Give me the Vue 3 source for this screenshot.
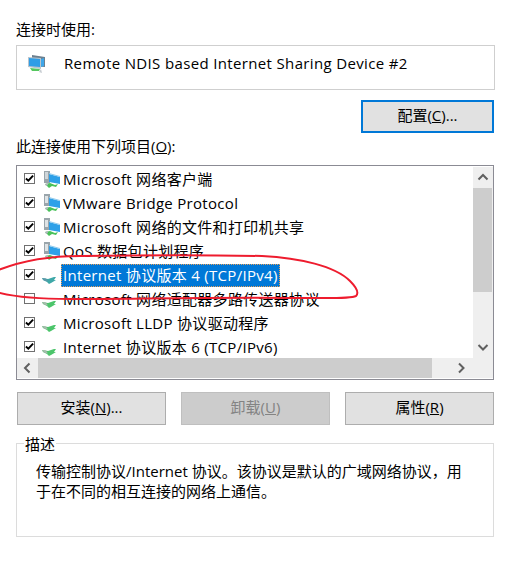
<script setup>
const items = [
  { name: 'Microsoft 网络客户端', on: true, kind: 'client' },
  { name: 'VMware Bridge Protocol', on: true, kind: 'service' },
  { name: 'Microsoft 网络的文件和打印机共享', on: true, kind: 'service' },
  { name: 'QoS 数据包计划程序', on: true, kind: 'service' },
  { name: 'Internet 协议版本 4 (TCP/IPv4)', on: true, kind: 'proto', selected: true },
  { name: 'Microsoft 网络适配器多路传送器协议', on: false, kind: 'proto' },
  { name: 'Microsoft LLDP 协议驱动程序', on: true, kind: 'proto' },
  { name: 'Internet 协议版本 6 (TCP/IPv6)', on: true, kind: 'proto' }
]
</script>

<template>
  <div class="page">
    <div class="label">连接时使用:</div>
    <div class="device">
      <svg class="device-icon" width="20" height="20" viewBox="0 0 20 20">
        <path d="M5 1 L18 3 V13 L5 12 Z" fill="#6c7f8e" />
        <path d="M1 3 L14 4 V15 L1 13 Z" fill="#b9c4cc" />
        <path d="M2 4 L13 5 V13 L2 12 Z" fill="#2f9de6" />
        <path d="M14 5 L17 4 V12 L14 13 Z" fill="#3fa7ea" />
        <path d="M3 14 L13 15 L12 17 L5 17 Z" fill="#55c75f" />
        <path d="M14 15 L15 19 L12 18 Z" fill="#c7cdd2" />
      </svg>
      <span class="device-name">Remote NDIS based Internet Sharing Device #2</span>
    </div>
    <div class="config-row">
      <button class="btn btn-focus">配置(<u>C</u>)...</button>
    </div>
    <div class="label label-list">此连接使用下列项目(<u>O</u>):</div>

    <div class="list">
      <div class="rows">
        <div v-for="item in items" :key="item.name" class="row">
          <span class="check">
            <svg v-if="item.on" width="10" height="9" viewBox="0 0 10 9">
              <path d="M1 4.5 L3.7 7 L9 1.2" fill="none" stroke="#000" stroke-width="2.1" />
            </svg>
          </span>
          <svg v-if="item.kind !== 'proto'" class="icon" width="20" height="20" viewBox="0 0 20 20">
            <rect x="2" :y="item.kind === 'client' ? 2 : 1" width="6" height="12" fill="#9aa5ab" />
            <rect x="3" y="3" width="3" height="7" :fill="item.kind === 'client' ? '#cfd6da' : '#dfe3e5'" />
            <path d="M7 5 L18 8 V15 L7 13 Z" fill="#2da0e8" />
            <path d="M7 4 L18 7 V8 L7 5 Z" fill="#8fc9ec" />
            <path d="M3 15 L8 14 L13 16 L16 15 L14 18 L10 17 L7 19 L5 17 Z" fill="#49c15a" />
            <path d="M3 15 L6 14 L6 16 L4 17 Z" fill="#aeb6ba" />
          </svg>
          <svg v-else class="icon" width="20" height="20" viewBox="0 0 20 20">
            <path
              d="M0 13 L6 14 L12 12 L14 12 L12 15 L14 15 L9 18 L7 19 L5 17 L1 15 Z"
              :fill="item.selected ? '#3ea8a8' : '#4cc56b'"
            />
            <path d="M0 13 L4 13.5 L6 16.5 L2 15.5 Z" :fill="item.selected ? '#5f97a8' : '#a9b8ae'" />
          </svg>
          <span class="row-name" :class="{ selected: item.selected }">{{ item.name }}</span>
        </div>
      </div>
      <div class="vbar">
        <svg class="arrow" width="21" height="21" viewBox="0 0 21 21">
          <path d="M5.5 12.5 L10 8 L14.5 12.5" fill="none" stroke="#606060" stroke-width="2" />
        </svg>
        <div class="vthumb"></div>
        <div class="spacer"></div>
        <svg class="arrow" width="21" height="21" viewBox="0 0 21 21">
          <path d="M5.5 8 L10 12.5 L14.5 8" fill="none" stroke="#606060" stroke-width="2" />
        </svg>
      </div>
      <div class="hbar">
        <svg class="arrow" width="21" height="20" viewBox="0 0 21 20">
          <path d="M12.5 5.5 L8 10 L12.5 14.5" fill="none" stroke="#606060" stroke-width="2" />
        </svg>
        <div class="hthumb"></div>
        <div class="hend">
          <svg class="arrow" width="21" height="20" viewBox="0 0 21 20">
            <path d="M8 5.5 L12.5 10 L8 14.5" fill="none" stroke="#606060" stroke-width="2" />
          </svg>
        </div>
      </div>
      <div class="corner"></div>
    </div>

    <div class="actions">
      <button class="btn">安装(<u>N</u>)...</button>
      <button class="btn btn-disabled">卸载(<u>U</u>)</button>
      <button class="btn">属性(<u>R</u>)</button>
    </div>

    <div class="group">
      <span class="legend">描述</span>
      <p class="desc">传输控制协议/Internet 协议。该协议是默认的广域网络协议&#65292;用<br />于在不同的相互连接的网络上通信。</p>
    </div>

    <svg class="ink" width="511" height="565" viewBox="0 0 511 565">
      <path
        d="M-4 271 C18 262 44 256 80 256 C140 255 215 255 262 256 C300 258 335 266 350 281 C356 287 359 293 356 296 C350 299 330 298 300 298 C220 297 130 299 70 299 C45 299 18 298 -4 292"
        fill="none"
        stroke="#ee1c2e"
        stroke-width="2"
      />
    </svg>
  </div>
</template>

<style>
html, body { margin: 0; background: #fff; }
</style>

<style scoped>
.page {
  position: relative;
  box-sizing: border-box;
  width: 511px;
  height: 565px;
  padding: 19px 16px 0;
  overflow: hidden;
  background: #fff;
  color: #000;
  font-family: "Open Sans", "Noto Sans CJK SC", sans-serif;
  font-size: 15px;
  line-height: 20px;
}
.label { height: 20px; }
.device {
  box-sizing: border-box;
  display: flex;
  align-items: flex-start;
  height: 45px;
  margin-top: 6px;
  border: 1px solid #cfcfcf;
  padding: 6px 0 0 10px;
}
.device-icon { flex: none; margin-top: 2px; }
.device-name { margin-left: 17px; line-height: 22px; letter-spacing: 0.35px; }
.config-row {
  display: flex;
  justify-content: flex-end;
  margin-top: 10px;
  padding-right: 1px;
}
.btn {
  box-sizing: border-box;
  width: 149px;
  height: 33px;
  padding: 0 0 4px;
  border: 1px solid #adadad;
  background: #e1e1e1;
  color: #000;
  font: inherit;
}
.btn-focus {
  width: 133px;
  border: 2px solid #0078d7;
}
.btn-disabled {
  border-color: #bfbfbf;
  background: #cccccc;
  color: #838383;
}
.label-list { margin-top: 3px; }
.list {
  box-sizing: border-box;
  display: grid;
  grid-template-columns: 1fr 20px;
  grid-template-rows: 191px 20px;
  height: 215px;
  width: 478px;
  margin-top: 9px;
  border: 1px solid #8b8b94;
  padding: 1px 0 1px 0;
}
.rows { overflow: hidden; }
.row {
  display: flex;
  align-items: center;
  height: 24px;
  padding-left: 7px;
  white-space: nowrap;
  letter-spacing: 0.3px;
}
.check {
  box-sizing: border-box;
  flex: none;
  display: flex;
  align-items: center;
  justify-content: center;
  width: 11px;
  height: 11px;
  border: 1px solid #707070;
  margin-top: -1px;
}
.icon { flex: none; margin-left: 7px; }
.row-name {
  margin-left: -1px;
  padding: 1px 2px;
  line-height: 21px;
}
.row-name.selected {
  background: #0078d7;
  color: #fff;
  outline: 1px dotted #e8a05a;
  outline-offset: -1px;
}
.vbar {
  display: flex;
  flex-direction: column;
  background: #efefef;
  overflow: hidden;
}
.arrow { flex: none; display: block; }
.vthumb { flex: none; height: 104px; margin-right: 1px; background: #cdcdcd; }
.spacer { flex: 1; }
.hbar { display: flex; background: #efefef; }
.hthumb { flex: none; width: 394px; background: #cdcdcd; }
.hend { flex: 1; display: flex; justify-content: flex-end; padding-right: 1px; }
.corner { background: #efefef; }
.actions {
  display: flex;
  gap: 15px;
  margin-top: 12px;
  padding-left: 1px;
}
.group {
  position: relative;
  box-sizing: border-box;
  width: 478px;
  height: 94px;
  margin-top: 18px;
  border: 1px solid #dcdcdc;
  padding: 17px 19px 0;
}
.legend {
  position: absolute;
  top: -10px;
  left: 7px;
  padding: 0 1px;
  background: #fff;
}
.desc {
  margin: 0;
  white-space: nowrap;
}
.ink {
  position: absolute;
  top: 0;
  left: 0;
  pointer-events: none;
}
</style>
